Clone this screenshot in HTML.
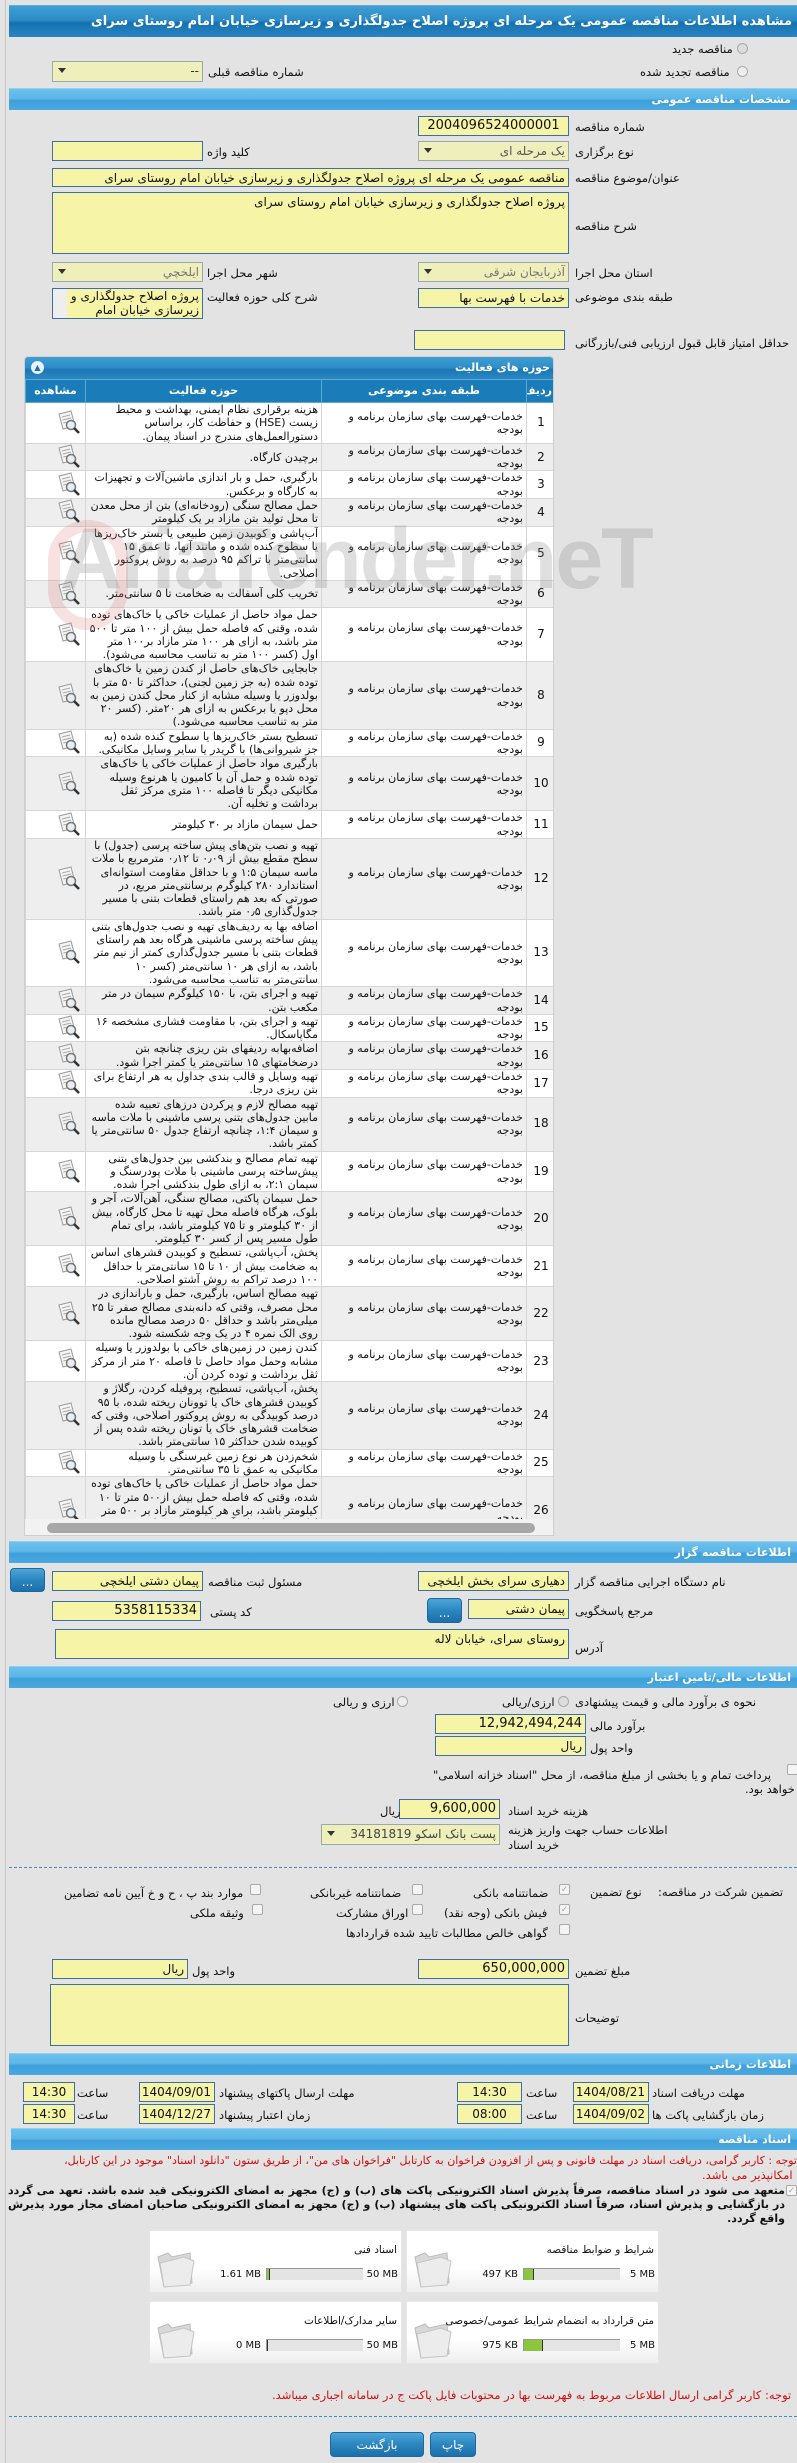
<!DOCTYPE html>
<html><head><meta charset="utf-8"><style>
*{box-sizing:border-box;margin:0;padding:0}
body{width:797px;height:2463px;overflow:hidden;background:#e3e3e3;font-family:"DejaVu Sans","Liberation Sans",sans-serif;font-size:11px;color:#111;position:relative}
.a{position:absolute}
.lb{position:absolute;white-space:nowrap;direction:rtl;font-size:11.5px;color:#111}
.in{position:absolute;background:#f6f4a6;border:1px solid #3d6fa6;direction:rtl;white-space:nowrap;overflow:hidden;padding:0 3px;font-size:12px;line-height:18px;text-align:right}
.sel{background:#efefbc;border-color:#9aa;color:#777}
.sel:after{content:"";position:absolute;left:5px;top:6px;border-left:4px solid transparent;border-right:4px solid transparent;border-top:5px solid #333}
.hd{position:absolute;left:9px;right:0;height:22px;background:linear-gradient(#6dc1ec,#5cb6e8 45%,#3f9fd9 55%,#4aa9df);border-top:1px solid #8fd0f2;color:#fff;font-weight:bold;font-size:11px;direction:rtl;padding-right:6px;line-height:22px}
.rd{position:absolute;width:11px;height:11px;border-radius:50%;border:1px solid #aaa;background:#eee}
.cb{position:absolute;width:11px;height:11px;border:1px solid #aaa;background:#f4f4f4;border-radius:2px}
.btn{position:absolute;background:linear-gradient(#4ea5d8,#2b86c0 50%,#1c6faa);border:1px solid #1a6aa0;border-radius:4px;color:#fff;text-align:center;font-size:12px}
table{border-collapse:collapse;table-layout:fixed}
td{border:1px solid #d6d6d6;vertical-align:middle;direction:rtl;font-size:11px;line-height:13.3px;padding:0 3px;overflow:hidden}
tr:nth-child(even) td{background:#eeeeee}
tr:nth-child(odd) td{background:#fff}
.ic{display:block;margin-left:6px}
.box{position:absolute;background:linear-gradient(#fff 60%,#eee);border:1px solid #e6e6e6}
.bar{position:absolute;height:12px;background:#e4e4e4;border:1px solid #999;border-width:1px 0 0 1px}
.bar i{position:absolute;left:0;top:0;bottom:0;background:#8cc63f;border-right:1px solid #333}
.red{color:#d01010}
</style></head><body>
<div class="a" style="left:5px;top:0;width:1px;height:2463px;background:#c4c4c4"></div>

<div class="a" style="left:9px;top:5px;right:0;height:32px;background:linear-gradient(#3f9fd3,#2d8cc6 45%,#1570b0 55%,#2a87c2);border-top:1px solid #5cb0de;color:#fff;font-weight:bold;font-size:13px;direction:rtl;white-space:nowrap;line-height:32px;padding-right:5px;overflow:hidden">مشاهده اطلاعات مناقصه عمومی یک مرحله ای پروژه اصلاح جدولگذاری و زیرسازی خیابان امام روستای سرای</div>

<div class="rd" style="left:737px;top:43px;background:#ddd"></div><div class="lb" style="left:672px;top:42px">مناقصه جدید</div>
<div class="rd" style="left:737px;top:66px"></div><div class="lb" style="left:640px;top:65px">مناقصه تجدید شده</div>
<div class="in sel" style="left:52px;top:61px;width:151px;height:21px;color:#333">--</div>
<div class="lb" style="left:208px;top:65px">شماره مناقصه قبلی</div>

<div class="hd" style="top:88px">مشخصات مناقصه عمومی</div>
<div class="in" style="left:418px;top:116px;width:151px;height:20px;text-align:center;direction:ltr;font-size:13px">2004096524000001</div><div class="lb" style="left:575px;top:120px">شماره مناقصه</div>
<div class="in sel" style="left:418px;top:141px;width:151px;height:20px;color:#555">یک مرحله ای</div><div class="lb" style="left:575px;top:145px">نوع برگزاری</div>
<div class="in" style="left:52px;top:141px;width:151px;height:20px"></div><div class="lb" style="left:207px;top:145px">کلید واژه</div>
<div class="in" style="left:52px;top:168px;width:517px;height:19px">مناقصه عمومی یک مرحله ای پروژه اصلاح جدولگذاری و زیرسازی خیابان امام روستای سرای</div><div class="lb" style="left:575px;top:171px">عنوان/موضوع مناقصه</div>
<div class="in" style="left:52px;top:192px;width:517px;height:62px">پروژه اصلاح جدولگذاری و زیرسازی خیابان امام روستای سرای</div><div class="lb" style="left:575px;top:219px">شرح مناقصه</div>
<div class="in sel" style="left:418px;top:262px;width:151px;height:20px">آذربایجان شرقی</div><div class="lb" style="left:575px;top:266px">استان محل اجرا</div>
<div class="in sel" style="left:52px;top:262px;width:151px;height:20px">ایلخچي</div><div class="lb" style="left:207px;top:266px">شهر محل اجرا</div>
<div class="in" style="left:418px;top:288px;width:151px;height:20px">خدمات با فهرست بها</div><div class="lb" style="left:575px;top:290px">طبقه بندی موضوعی</div>
<div class="in" style="left:52px;top:288px;width:151px;height:31px;white-space:normal;line-height:14px;padding-left:16px">پروژه اصلاح جدولگذاری و زیرسازی خیابان امام</div>
<div class="a" style="left:53px;top:289px;width:14px;height:29px;background:#eee"></div>
<div class="lb" style="left:207px;top:290px">شرح کلی حوزه فعالیت</div>
<div class="in" style="left:414px;top:330px;width:151px;height:20px"></div><div class="lb" style="left:575px;top:336px">حداقل امتیاز قابل قبول ارزیابی فنی/بازرگانی</div>

<div class="a" style="left:24px;top:356px;width:530px;height:1180px;background:#fff;border:1px solid #cfcfcf;border-radius:4px 4px 0 0;overflow:hidden">
<div style="height:22px;background:linear-gradient(#3f9fd3,#2d8cc6 50%,#1a77b4 55%,#2a87c2);color:#fff;font-weight:bold;direction:rtl;line-height:22px;padding-right:3px;position:relative">حوزه های فعالیت<span style="position:absolute;left:6px;top:4px;width:13px;height:13px;border-radius:50%;background:#e8f2fa;color:#1b6fa8;font-size:8px;line-height:13px;text-align:center">▲</span></div>
<table style="width:530px;direction:rtl" id="t">
<colgroup><col style="width:29px"><col style="width:205px"><col style="width:236px"><col style="width:60px"></colgroup>
<tr style="height:23px"><td style="background:#1a7cb8;color:#fff;font-weight:bold;border-color:#5aa8d8">ردیف</td><td style="background:#1a7cb8;color:#fff;font-weight:bold;text-align:center;border-color:#5aa8d8">طبقه بندی موضوعی</td><td style="background:#1a7cb8;color:#fff;font-weight:bold;text-align:center;border-color:#5aa8d8">حوزه فعالیت</td><td style="background:#1a7cb8;color:#fff;font-weight:bold;text-align:center;border-color:#5aa8d8">مشاهده</td></tr>
</table>
<div style="position:absolute;left:0;right:0;top:1162px;height:18px;background:#f2f2f2"><div style="position:absolute;left:22px;right:18px;top:4px;height:10px;border-radius:5px;background:#a8a8a8"></div></div>
</div>

<div class="hd" style="top:1541px">اطلاعات مناقصه گزار</div>
<div class="in" style="left:418px;top:1571px;width:151px;height:20px">دهیاری سرای بخش ایلخچی</div><div class="lb" style="left:575px;top:1575px">نام دستگاه اجرایی مناقصه گزار</div>
<div class="in" style="left:52px;top:1571px;width:151px;height:20px">پیمان دشتی ایلخچی</div><div class="lb" style="left:208px;top:1575px">مسئول ثبت مناقصه</div>
<div class="btn" style="left:10px;top:1568px;width:35px;height:24px;line-height:26px">...</div>
<div class="in" style="left:468px;top:1599px;width:101px;height:20px">پیمان دشتی</div><div class="lb" style="left:575px;top:1604px">مرجع پاسخگویی</div>
<div class="btn" style="left:427px;top:1598px;width:35px;height:25px;line-height:28px">...</div>
<div class="in" style="left:52px;top:1601px;width:149px;height:20px;font-size:13px">5358115334</div><div class="lb" style="left:210px;top:1605px">کد پستی</div>
<div class="in" style="left:55px;top:1629px;width:514px;height:30px">روستای سرای، خیابان لاله</div><div class="lb" style="left:575px;top:1641px">آدرس</div>

<div class="hd" style="top:1666px">اطلاعات مالی/تامین اعتبار</div>
<div class="lb" style="left:575px;top:1695px">نحوه ی برآورد مالی و قیمت پیشنهادی</div>
<div class="rd" style="left:558px;top:1696px;background:#ddd"></div><div class="lb" style="left:502px;top:1695px">ارزی/ریالی</div>
<div class="rd" style="left:397px;top:1696px"></div><div class="lb" style="left:333px;top:1695px">ارزی و ریالی</div>
<div class="in" style="left:435px;top:1714px;width:151px;height:20px;font-size:13px">12,942,494,244</div><div class="lb" style="left:590px;top:1719px">برآورد مالی</div>
<div class="in" style="left:435px;top:1736px;width:151px;height:20px">ریال</div><div class="lb" style="left:590px;top:1741px">واحد پول</div>
<div class="cb" style="left:787px;top:1764px"></div>
<div class="lb" style="left:433px;top:1768px">پرداخت تمام و یا بخشی از مبلغ مناقصه، از محل "اسناد خزانه اسلامی"</div>
<div class="lb" style="left:745px;top:1782px">خواهد بود.</div>
<div class="in" style="left:399px;top:1799px;width:101px;height:20px;font-size:13px">9,600,000</div><div class="lb" style="left:508px;top:1804px">هزینه خرید اسناد</div><div class="lb" style="left:380px;top:1804px">ریال</div>
<div class="in sel" style="left:321px;top:1824px;width:179px;height:21px;color:#444">پست بانک اسکو 34181819</div>
<div class="lb" style="left:508px;top:1823px">اطلاعات حساب جهت واریز هزینه</div><div class="lb" style="left:508px;top:1838px">خرید اسناد</div>
<div class="a" style="left:9px;right:0;top:1867px;border-top:1px dashed #3b8fc8"></div>

<div class="lb" style="left:658px;top:1885px">تضمین شرکت در مناقصه:</div>
<div class="lb" style="left:590px;top:1885px">نوع تضمین</div>
<div class="cb" style="left:559px;top:1884px;color:#aaa;font-size:9px;line-height:10px;text-align:center">✓</div><div class="lb" style="left:473px;top:1886px">ضمانتنامه بانکی</div>
<div class="cb" style="left:412px;top:1884px"></div><div class="lb" style="left:310px;top:1886px">ضمانتنامه غیربانکی</div>
<div class="cb" style="left:250px;top:1884px"></div><div class="lb" style="left:64px;top:1886px">موارد بند پ ، ح و خ آیین نامه تضامین</div>
<div class="cb" style="left:559px;top:1904px;color:#aaa;font-size:9px;line-height:10px;text-align:center">✓</div><div class="lb" style="left:444px;top:1906px">فیش بانکی (وجه نقد)</div>
<div class="cb" style="left:412px;top:1904px"></div><div class="lb" style="left:336px;top:1906px">اوراق مشارکت</div>
<div class="cb" style="left:252px;top:1904px"></div><div class="lb" style="left:190px;top:1906px">وثیقه ملکی</div>
<div class="cb" style="left:559px;top:1924px"></div><div class="lb" style="left:346px;top:1926px">گواهی خالص مطالبات تایید شده قراردادها</div>
<div class="in" style="left:418px;top:1959px;width:151px;height:20px;font-size:13px">650,000,000</div><div class="lb" style="left:575px;top:1964px">مبلغ تضمین</div>
<div class="in" style="left:52px;top:1959px;width:136px;height:20px">ریال</div><div class="lb" style="left:192px;top:1964px">واحد پول</div>
<div class="in" style="left:50px;top:1984px;width:519px;height:62px"></div><div class="lb" style="left:575px;top:2011px">توضیحات</div>

<div class="hd" style="top:2053px">اطلاعات زمانی</div>
<div class="in" style="left:573px;top:2082px;width:76px;height:20px;text-align:center;font-size:12px">1404/08/21</div><div class="lb" style="left:652px;top:2086px">مهلت دریافت اسناد</div>
<div class="in" style="left:457px;top:2082px;width:65px;height:20px;text-align:center;font-size:12px">14:30</div><div class="lb" style="left:526px;top:2086px">ساعت</div>
<div class="in" style="left:139px;top:2082px;width:76px;height:20px;text-align:center;font-size:12px">1404/09/01</div><div class="lb" style="left:219px;top:2086px">مهلت ارسال پاکتهای پیشنهاد</div>
<div class="in" style="left:23px;top:2082px;width:52px;height:20px;text-align:center;font-size:12px">14:30</div><div class="lb" style="left:77px;top:2086px">ساعت</div>
<div class="in" style="left:573px;top:2104px;width:76px;height:20px;text-align:center;font-size:12px">1404/09/02</div><div class="lb" style="left:652px;top:2108px">زمان بازگشایی پاکت ها</div>
<div class="in" style="left:457px;top:2104px;width:65px;height:20px;text-align:center;font-size:12px">08:00</div><div class="lb" style="left:526px;top:2108px">ساعت</div>
<div class="in" style="left:139px;top:2104px;width:76px;height:20px;text-align:center;font-size:12px">1404/12/27</div><div class="lb" style="left:219px;top:2108px">زمان اعتبار پیشنهاد</div>
<div class="in" style="left:23px;top:2104px;width:52px;height:20px;text-align:center;font-size:12px">14:30</div><div class="lb" style="left:77px;top:2108px">ساعت</div>

<div class="hd" style="top:2128px;left:11px">اسناد مناقصه</div>
<div class="a red" style="left:20px;right:0;top:2154px;direction:rtl;font-size:11px;line-height:14px;white-space:nowrap;overflow:hidden">توجه : کاربر گرامی، دریافت اسناد در مهلت قانونی و پس از افزودن فراخوان به کارتابل "فراخوان های من"، از طریق ستون "دانلود اسناد" موجود در این کارتابل،</div>
<div class="lb red" style="left:702px;top:2168px">امکانپذیر می باشد.</div>
<div class="cb" style="left:786px;top:2185px;color:#aaa;font-size:9px;line-height:10px;text-align:center">✓</div>
<div class="a" style="left:8px;right:12px;top:2184px;direction:rtl;font-weight:bold;font-size:11px;line-height:14px;text-align:justify">متعهد می شود در اسناد مناقصه، صرفاً پذیرش اسناد الکترونیکی پاکت های (ب) و (ج) مجهز به امضای الکترونیکی قید شده باشد. تعهد می گردد در بازگشایی و پذیرش اسناد، صرفاً اسناد الکترونیکی پاکت های پیشنهاد (ب) و (ج) مجهز به امضای الکترونیکی صاحبان امضای مجاز مورد پذیرش واقع گردد.</div>

<div id="files"></div>

<div class="lb red" style="left:272px;top:2388px;font-size:11.5px">توجه: کاربر گرامی ارسال اطلاعات مربوط به فهرست بها در محتوبات فایل پاکت ج در سامانه اجباری میباشد.</div>
<div class="a" style="left:9px;right:0;top:2416px;border-top:1px dashed #3b8fc8"></div>
<div class="btn" style="left:330px;top:2432px;width:94px;height:25px;line-height:24px">بازگشت</div>
<div class="btn" style="left:430px;top:2432px;width:46px;height:25px;line-height:24px">چاپ</div>

<script>
var rows=[
[3,"هزینه برقراری نظام ایمنی، بهداشت و محیط زیست (HSE) و حفاظت کار، براساس دستورالعمل‌های مندرج در اسناد پیمان."],
[2,"برچیدن کارگاه."],
[2,"بارگیری، حمل و بار اندازی ماشین‌آلات و تجهیزات به کارگاه و برعکس."],
[2,"حمل مصالح سنگی (رودخانه‌ای) بتن از محل معدن تا محل تولید بتن مازاد بر یک کیلومتر"],
[4,"آب‌پاشی و کوبیدن زمین طبیعی یا بستر خاک‌ریزها یا سطوح کنده شده و مانند آنها، تا عمق ۱۵ سانتی‌متر با تراکم ۹۵ درصد به روش پروکتور اصلاحی."],
[2,"تخریب کلی آسفالت  به ضخامت تا ۵ سانتی‌متر."],
[4,"حمل مواد حاصل از عملیات خاکی یا خاک‌های توده شده، وقتی که فاصله حمل بیش از ۱۰۰ متر تا ۵۰۰ متر باشد، به ازای هر ۱۰۰ متر مازاد بر۱۰۰ متر اول (کسر ۱۰۰ متر به تناسب محاسبه می‌شود)."],
[5,"جابجایی خاک‌های حاصل از کندن زمین یا خاک‌های توده شده (به جز زمین لجنی)، حداکثر تا ۵۰ متر با بولدوزر یا وسیله مشابه از کنار محل کندن زمین به محل دپو یا برعکس به ازای هر ۲۰متر. (کسر ۲۰ متر به تناسب محاسبه می‌شود.)"],
[2,"تسطیح بستر خاک‌ریزها یا سطوح کنده شده (به جز شیروانی‌ها) با گریدر یا سایر وسایل مکانیکی."],
[4,"بارگیری مواد حاصل از عملیات خاکی یا خاک‌های توده شده و  حمل آن با کامیون یا هرنوع وسیله مکانیکی دیگر تا فاصله ۱۰۰ متری مرکز ثقل برداشت و تخلیه آن."],
[2,"حمل سیمان مازاد بر ۳۰ کیلومتر"],
[6,"تهیه و نصب بتن‌های پیش ساخته پرسی (جدول) با سطح مقطع بیش از ۰٫۰۹ تا ۰٫۱۲ مترمربع با ملات ماسه سیمان ۱:۵ و با حداقل مقاومت استوانه‌ای استاندارد ۲۸۰ کیلوگرم برسانتی‌متر مربع، در صورتی که بعد هم راستای قطعات بتنی با مسیر جدول‌گذاری ۰٫۵ متر باشد."],
[5,"اضافه بها به ردیف‌های تهیه و نصب جدول‌های بتنی پیش ساخته پرسی ماشینی هرگاه بعد هم راستای قطعات بتنی با مسیر جدول‌گذاری کمتر از نیم متر باشد، به ازای هر ۱۰ سانتی‌متر (کسر ۱۰ سانتی‌متر به تناسب محاسبه می‌شود."],
[2,"تهیه و اجرای بتن، با ۱۵۰ کیلوگرم سیمان در متر مکعب بتن."],
[2,"تهیه و اجرای بتن، با مقاومت فشاری مشخصه ۱۶ مگاپاسکال."],
[2,"اضافه‌بهابه ردیفهای بتن ریزی چنانچه بتن درضخامتهای ۱۵ سانتی‌متر یا کمتر اجرا شود."],
[2,"تهیه وسایل و قالب بندی جداول به هر ارتفاع برای بتن ریزی درجا."],
[4,"تهیه مصالح لازم و پرکردن درزهای تعبیه شده مابین جدول‌های بتنی پرسی ماشینی با ملات ماسه و سیمان ۱:۴، چنانچه ارتفاع جدول ۵۰ سانتی‌متر یا کمتر باشد."],
[3,"تهیه تمام مصالح و بندکشی بین جدول‌های بتنی پیش‌ساخته پرسی ماشینی با ملات پودرسنگ و سیمان ۲:۱، به ازای طول بندکشی اجرا شده."],
[4,"حمل سیمان پاکتی، مصالح سنگی، آهن‌آلات، آجر و بلوک، هرگاه فاصله محل تهیه تا محل کارگاه، بیش از ۳۰ کیلومتر و تا ۷۵ کیلومتر باشد، برای تمام طول مسیر پس از کسر ۳۰ کیلومتر."],
[3,"پخش، آب‌پاشی، تسطیح و کوبیدن قشرهای اساس به ضخامت بیش از ۱۰ تا ۱۵ سانتی‌متر با حداقل ۱۰۰ درصد تراکم به روش آشتو اصلاحی."],
[4,"تهیه مصالح اساس، بارگیری، حمل و باراندازی در محل مصرف، وقتی که دانه‌بندی مصالح صفر تا ۲۵ میلی‌متر باشد و حداقل ۵۰ درصد مصالح مانده روی الک نمره ۴ در یک وجه شکسته شود."],
[3,"کندن زمین در زمین‌های خاکی با بولدوزر یا وسیله مشابه وحمل مواد حاصل تا فاصله ۲۰ متر از مرکز ثقل برداشت و توده کردن آن."],
[5,"پخش، آب‌پاشی، تسطیح، پروفیله کردن، رگلاژ و کوبیدن قشرهای خاک یا توونان ریخته شده، با ۹۵ درصد کوبیدگی به روش پروکتور اصلاحی، وقتی که ضخامت قشرهای خاک یا تونان ریخته شده پس از کوبیده شدن حداکثر ۱۵ سانتی‌متر باشد."],
[2,"شخم‌زدن هر نوع زمین غیرسنگی با وسیله مکانیکی به عمق تا ۳۵ سانتی‌متر."],
[5,"حمل مواد حاصل از عملیات خاکی یا خاک‌های توده شده، وقتی  که فاصله حمل بیش از۵۰۰ متر تا ۱۰ کیلومتر باشد، برای هر کیلومتر مازاد بر ۵۰۰  متر اول، برای راه‌های آسفالتی (کسر کیلومتر به نسبت قیمت یک کیلومتر محاسبه می‌شود)."]];
var H={2:27,3:40,4:53,5:67,6:80};
var ic='<svg class="ic" width="26" height="26" viewBox="0 0 26 26"><path d="M3 4 L15 1 L19 16 L7 19 Z" fill="#f4f4f4" stroke="#9a9a9a"/><path d="M6 7 L14 5 M6.7 10 L15 8 M7.4 13 L13 11.6" stroke="#aaa"/><circle cx="15" cy="15" r="4.5" fill="#e8eef2" stroke="#777" stroke-width="1.5"/><path d="M18 18 L23 23" stroke="#333" stroke-width="2.6"/></svg>';
var h='';rows.forEach(function(r,i){var hh=H[r[0]];h+='<tr style="height:'+hh+'px"><td style="text-align:center;font-size:12px">'+(i+1)+'</td><td><div style="max-height:'+hh+'px;overflow:hidden;padding-left:0;font-size:11px">خدمات-فهرست بهای سازمان برنامه و بودجه</div></td><td><div style="max-height:'+hh+'px;overflow:hidden">'+r[1]+'</div></td><td>'+ic+'</td></tr>';});
document.getElementById('t').insertAdjacentHTML('beforeend',h);
var f=[[406,2230,"شرایط و ضوابط مناقصه","497 KB","5 MB",10],[149,2230,"اسناد فنی","1.61 MB","50 MB",3],[406,2301,"متن قرارداد به انضمام شرایط عمومی/خصوصی","975 KB","5 MB",20],[149,2301,"سایر مدارک/اطلاعات","0 MB","50 MB",0]];
var fh='';f.forEach(function(b){fh+='<div class="box" style="left:'+b[0]+'px;top:'+b[1]+'px;width:253px;height:63px">'+
'<svg style="position:absolute;left:4px;top:18px" width="42" height="40" viewBox="0 0 42 40"><path d="M4 8 L14 4 L18 8 L36 4 L38 34 L10 38 Z" fill="#d8d8d8" stroke="#bbb"/><path d="M6 14 L30 8 L40 12 L36 36 L10 38 Z" fill="#ececec" stroke="#c4c4c4"/></svg>'+
'<div style="position:absolute;right:4px;top:13px;direction:rtl;white-space:nowrap;font-size:10.5px">'+b[2]+'</div>'+
'<div style="position:absolute;right:3px;top:38px;font-size:10px;white-space:nowrap">'+b[4]+'</div>'+
'<div class="bar" style="left:116px;top:37px;width:97px"><i style="width:'+b[5]+'%"></i></div>'+
'<div style="position:absolute;right:140px;top:38px;font-size:10px;white-space:nowrap">'+b[3]+'</div></div>';});
document.getElementById('files').innerHTML=fh;
</script>
<div class="a" style="left:60px;top:510px;font-family:'Liberation Sans',sans-serif;font-size:86px;font-weight:bold;color:rgba(140,140,140,0.28);white-space:nowrap;letter-spacing:-2px">AriaTender.neT</div>
<div class="a" style="left:48px;top:520px;width:80px;height:110px;border:12px solid rgba(220,120,120,0.22);border-radius:40px"></div>
</body></html>
